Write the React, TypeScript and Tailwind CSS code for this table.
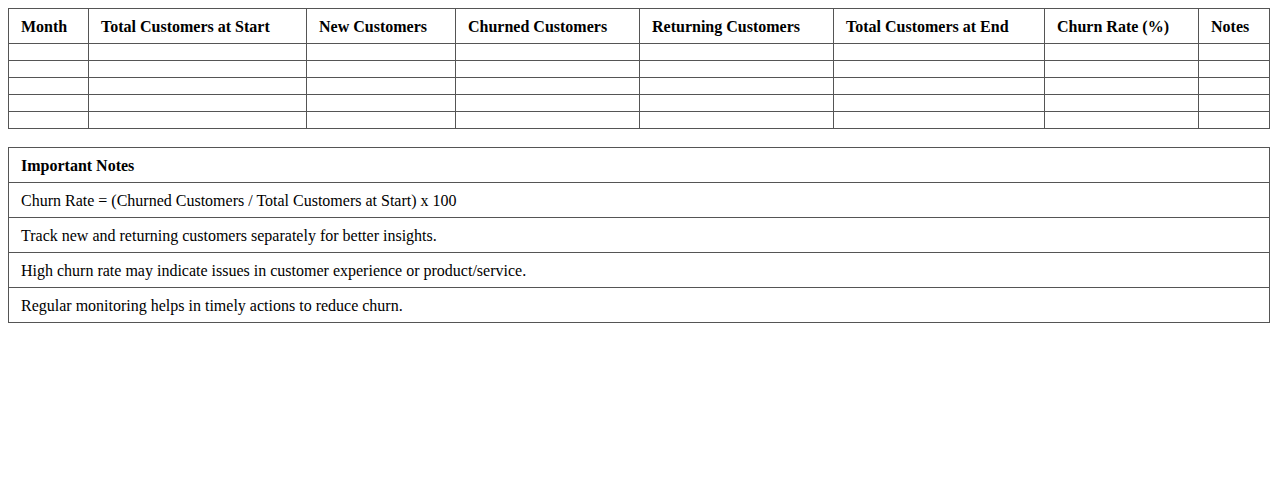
const headers = [
  'Month',
  'Total Customers at Start',
  'New Customers',
  'Churned Customers',
  'Returning Customers',
  'Total Customers at End',
  'Churn Rate (%)',
  'Notes',
];

const widths = ['w-[80px]', 'w-[218px]', 'w-[149px]', 'w-[184px]', 'w-[194px]', 'w-[211px]', 'w-[154px]', 'w-[71px]'];

const notes = [
  'Churn Rate = (Churned Customers / Total Customers at Start) x 100',
  'Track new and returning customers separately for better insights.',
  'High churn rate may indicate issues in customer experience or product/service.',
  'Regular monitoring helps in timely actions to reduce churn.',
];

export default function App() {
  return (
    <div className="min-h-screen bg-white p-2 text-black text-base leading-[18px] font-['Liberation_Serif','Times_New_Roman',serif]">
      {/* Tracker table */}
      <table className="w-full table-fixed border-collapse">
        <colgroup>
          {widths.map((w, i) => (
            <col key={i} className={w} />
          ))}
        </colgroup>
        <thead>
          <tr>
            {headers.map((h) => (
              <th key={h} className="border border-[#555] px-3 pt-[9px] pb-[7px] text-left font-bold whitespace-nowrap">
                {h}
              </th>
            ))}
          </tr>
        </thead>
        <tbody>
          {[0, 1, 2, 3, 4].map((r) => (
            <tr key={r}>
              {headers.map((h) => (
                <td key={h} className="border border-[#555] px-3 py-2"></td>
              ))}
            </tr>
          ))}
        </tbody>
      </table>

      {/* Notes table */}
      <table className="mt-[18px] w-full border-collapse">
        <thead>
          <tr>
            <th className="border border-[#555] px-3 pt-[9px] pb-[7px] text-left font-bold">Important Notes</th>
          </tr>
        </thead>
        <tbody>
          {notes.map((n) => (
            <tr key={n}>
              <td className="border border-[#555] px-3 pt-[9px] pb-[7px]">{n}</td>
            </tr>
          ))}
        </tbody>
      </table>
    </div>
  );
}
